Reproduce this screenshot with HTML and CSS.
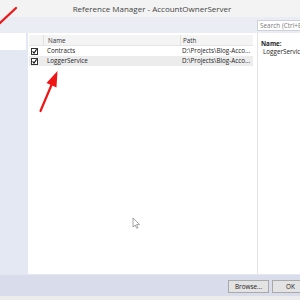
FILE: index.html
```html
<!DOCTYPE html>
<html lang="en">
<head>
    <meta charset="UTF-8">
    <title>Reference Manager - AccountOwnerServer</title>
    <link rel="stylesheet" href="styles.css">
</head>
<body>
    <div class="window">
        <div class="titlebar">Reference Manager - AccountOwnerServer</div>

        <div class="toolbar">
            <div class="search">Search (Ctrl+E)</div>
        </div>

        <div class="main">
            <div class="sidebar">
                <div class="sidebar-top"></div>
            </div>

            <div class="list">
                <div class="row header">
                    <div class="cell check"></div>
                    <div class="cell name">Name</div>
                    <div class="cell path">Path</div>
                </div>
                <div class="row">
                    <div class="cell check">
                        <svg class="box" width="7" height="7" viewBox="0 0 7 7"><rect x="0.5" y="0.5" width="6" height="6" fill="#fff" stroke="#333"/><polyline points="1.6,3.4 3,5 5.6,1.4" fill="none" stroke="#111" stroke-width="1.1"/></svg>
                    </div>
                    <div class="cell name">Contracts</div>
                    <div class="cell path">D:\Projects\Blog-Acco...</div>
                </div>
                <div class="row selected">
                    <div class="cell check">
                        <svg class="box" width="7" height="7" viewBox="0 0 7 7"><rect x="0.5" y="0.5" width="6" height="6" fill="#fff" stroke="#333"/><polyline points="1.6,3.4 3,5 5.6,1.4" fill="none" stroke="#111" stroke-width="1.1"/></svg>
                    </div>
                    <div class="cell name">LoggerService</div>
                    <div class="cell path">D:\Projects\Blog-Acco...</div>
                </div>
            </div>

            <div class="details">
                <div class="label">Name:</div>
                <div class="value">LoggerService</div>
            </div>
        </div>

        <div class="footer">
            <button class="btn">Browse...</button>
            <button class="btn ok">OK</button>
        </div>
        <div class="bottom-strip"></div>
    </div>

    <!-- annotations drawn over the screenshot -->
    <svg class="overlay" width="300" height="300" viewBox="0 0 300 300">
        <line x1="16" y1="8" x2="-2" y2="25" stroke="#f01414" stroke-width="2.2" stroke-linecap="round"/>
        <line x1="40.5" y1="111" x2="51.5" y2="85" stroke="#f01414" stroke-width="2.2" stroke-linecap="round"/>
        <polygon points="57.5,71 46.5,83 56.5,87.5" fill="#f01414"/>
        <path transform="translate(133 218)" d="M0 0 L0 9 L2.2 7 L3.7 10.3 L5 9.7 L3.6 6.6 L6.5 6.6 Z" fill="#fff" stroke="#808080" stroke-width="0.7"/>
    </svg>
</body>
</html>
```

FILE: styles.css
```css
* {
    margin: 0;
    padding: 0;
    box-sizing: border-box;
}

body {
    width: 300px;
    height: 300px;
    overflow: hidden;
    font-family: 'Open Sans', 'Noto Sans', sans-serif;
    color: #1e1e1e;
    background-color: #f2f2f2;
}

.window {
    display: flex;
    flex-direction: column;
    height: 300px;
}

.titlebar {
    height: 17px;
    background-color: #f3f3f3;
    color: #444;
    font-size: 8px;
    line-height: 17px;
    text-align: center;
    padding-left: 4px;
}

.toolbar {
    height: 16px;
    background-color: #eaedf4;
    display: flex;
    justify-content: flex-end;
    align-items: center;
}

.search {
    width: 43px;
    height: 11px;
    background-color: white;
    border: 1px solid #cdd0d8;
    border-right: none;
    font-size: 6.4px;
    line-height: 9px;
    color: #7a7a7a;
    padding-left: 2px;
    white-space: nowrap;
    overflow: hidden;
}

.main {
    height: 241px;
    display: flex;
}

.sidebar {
    width: 28px;
    background-color: #e4e8f3;
}

.sidebar-top {
    width: 26px;
    height: 17px;
    background-color: white;
}

.list {
    width: 229px;
    background-color: white;
    padding: 2px 4px 0 1px;
}

.row {
    display: flex;
    height: 10px;
    font-size: 6.3px;
    line-height: 10px;
}

.row.header {
    height: 11px;
    line-height: 11px;
    background-color: #f4f4f4;
    border-bottom: 1px solid #e6e6e6;
    color: #333;
}

.row.selected {
    background-color: #ececec;
}

.cell {
    white-space: nowrap;
    overflow: hidden;
}

.cell.check {
    width: 14px;
    display: flex;
    align-items: center;
    padding-left: 2px;
}

.cell.name {
    width: 137px;
    padding-left: 4px;
}

.cell.path {
    flex: 1;
    padding-left: 2px;
}

.header .cell.name,
.header .cell.path {
    border-left: 1px solid #e0e0e0;
}

.box {
    display: block;
}

.details {
    flex: 1;
    background-color: white;
    border-left: 1px solid #e4e4e4;
    padding: 7px 0 0 3px;
    font-size: 6.3px;
    line-height: 8px;
    white-space: nowrap;
    overflow: hidden;
}

.label {
    font-weight: bold;
}

.value {
    padding-left: 2px;
}

.footer {
    height: 22px;
    background-color: #d9dcea;
    border-top: 1px solid #e4e7f1;
    display: flex;
    justify-content: flex-end;
    align-items: center;
    gap: 3px;
    padding-top: 1px;
}

.btn {
    width: 41px;
    height: 13px;
    background-color: #e3e3e3;
    border: 1px solid #a9a9a9;
    font-family: 'Open Sans', 'Noto Sans', sans-serif;
    font-size: 6.4px;
    color: #222;
}

.btn.ok {
    width: 30px;
    margin-right: -2px;
    padding-right: 6px;
    text-align: right;
}

.bottom-strip {
    height: 4px;
    background-color: #ececec;
}

.overlay {
    position: absolute;
    top: 0;
    left: 0;
    pointer-events: none;
}
```
